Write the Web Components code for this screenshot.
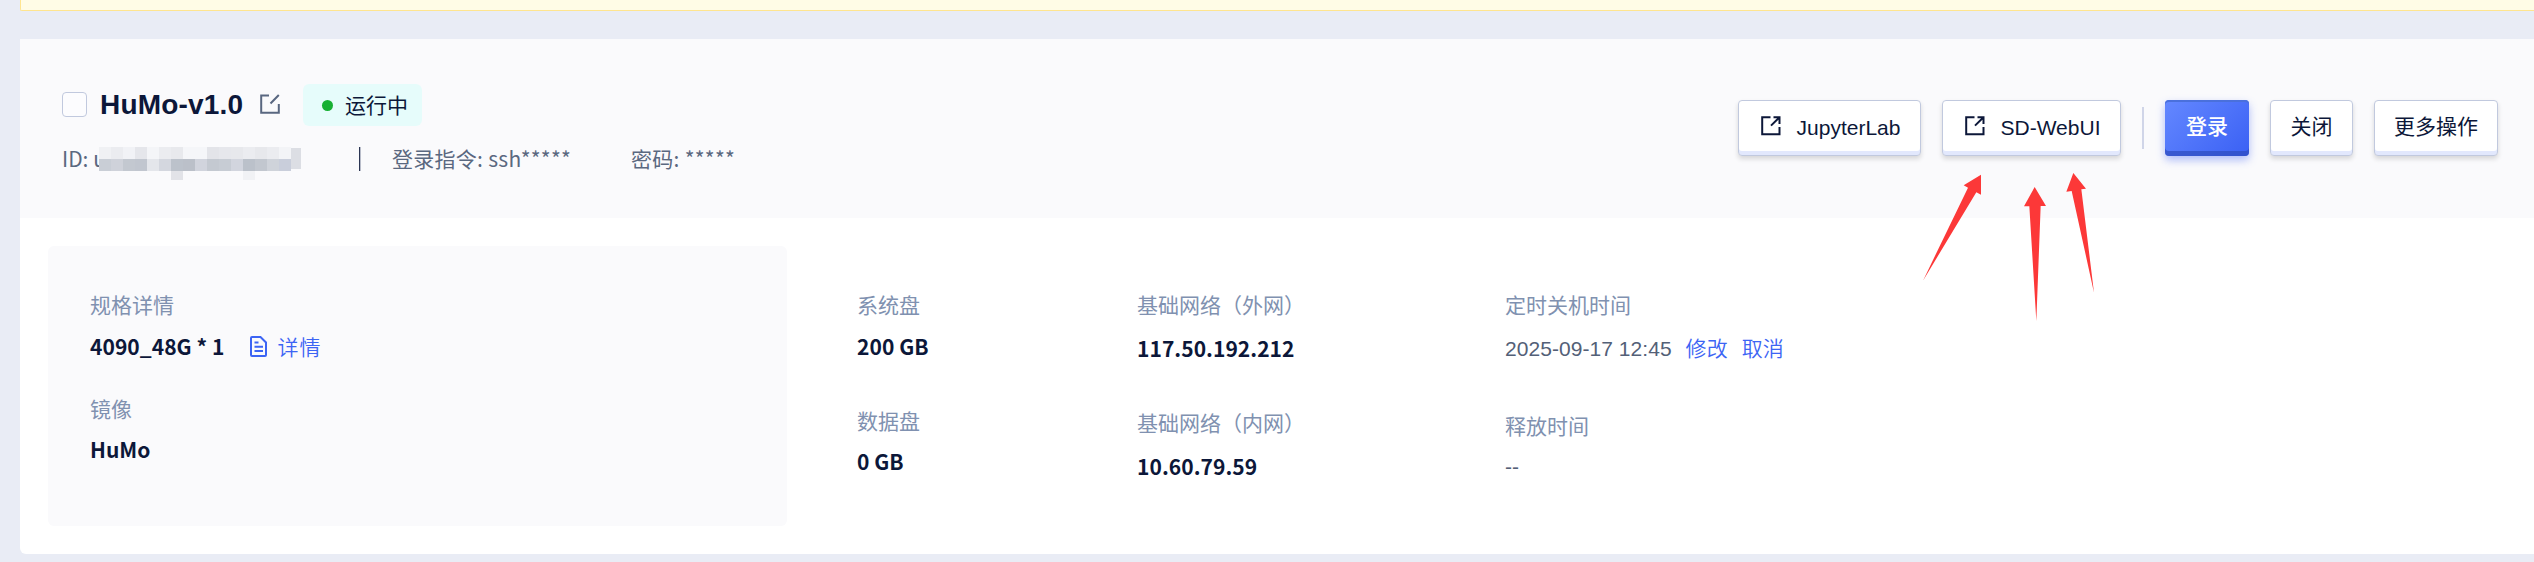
<!DOCTYPE html>
<html lang="zh-CN">
<head>
<meta charset="UTF-8">
<title>HuMo-v1.0</title>
<style>
  html, body {
    margin: 0;
    height: 562px;
    overflow: hidden;
    background: #e9ecf5;
    font-family: "Noto Sans CJK SC", sans-serif;
    font-size: 21px;
    line-height: 30px;
    color: #0c1739;
  }
</style>
</head>
<body>
<instance-page></instance-page>

<script>
const RESET = `* { box-sizing: border-box; } h1 { margin: 0; } button { margin: 0; padding: 0; }`;

class BaseElement extends HTMLElement {
  constructor() {
    super();
    this.attachShadow({mode: "open"});
  }
  connectedCallback() {
    const template = document.createElement("template");
    template.innerHTML = `<style>${RESET}${this.style_()}</style>${this.html_()}`;
    this.shadowRoot.appendChild(template.content.cloneNode(true));
  }
}

class UiIcon extends BaseElement {
  style_() {
    return `
      :host { display: block; flex: none; line-height: 0; }
      svg { display: block; fill: none; stroke: currentColor; stroke-width: 2; }
    `;
  }
  html_() {
    const icons = {
      edit: `<svg width="20" height="20"><path d="M9 1.5H1.2V18.8H18.8V10M10.5 9.5L18.8 1"/></svg>`,
      open: `<svg width="20" height="20"><path d="M9.5 1.2H1.2V18.2H18.5V11M12.5 1.2H18.5V8M18 1.7L10 9.6"/></svg>`,
      doc: `<svg width="17" height="21"><path d="M2 1H10.5L16 6.5V19a1 1 0 0 1-1 1H2a1 1 0 0 1-1-1V2a1 1 0 0 1 1-1ZM4.5 6.5H8.5M4.5 10.8H13M4.5 15H13"/></svg>`
    };
    return icons[this.getAttribute("name")];
  }
}

class UiButton extends BaseElement {
  style_() {
    return `
      :host { display: block; flex: none; }
      button {
        display: flex;
        align-items: center;
        justify-content: center;
        gap: 16px;
        width: 100%;
        height: 56px;
        padding-bottom: 3px;
        border: 1px solid #c1c9de;
        border-radius: 4px;
        background: #fff;
        box-shadow: inset 0 -4px 0 #e2e8fd, 0 3px 5px rgba(0, 0, 0, .14);
        color: #0c1739;
        font: 21px/30px "Liberation Sans", "Noto Sans CJK SC", sans-serif;
      }
      ui-icon { margin: -1px 0 0 2px; }
      .label { padding-top: 2px; }
      :host([cjk]) .label { padding-top: 0; }
      :host([type="primary"]) button {
        border: 0;
        background: linear-gradient(135deg, #6488ff, #3a60f4);
        box-shadow: inset 0 -5px 0 rgba(45, 75, 190, .7), inset 0 2px 0 #4a70dc, 0 4px 8px rgba(60, 96, 245, .4);
        color: #fff;
        font-weight: 500;
      }
    `;
  }
  html_() {
    const icon = this.hasAttribute("icon") ? `<ui-icon name="${this.getAttribute("icon")}"></ui-icon>` : "";
    return `<button>${icon}<span class="label"><slot></slot></span></button>`;
  }
}

class StatusBadge extends BaseElement {
  style_() {
    return `
      :host {
        display: flex;
        align-items: center;
        gap: 12px;
        width: 119px;
        height: 42px;
        padding-left: 19px;
        border-radius: 6px;
        background: #e6fcfb;
      }
      i { width: 11px; height: 11px; border-radius: 50%; background: #17b033; }
      span { margin-top: -2px; }
    `;
  }
  html_() {
    return `<i></i><span><slot></slot></span>`;
  }
}

// pixelated cover over the instance id
class IdMosaic extends BaseElement {
  style_() {
    return `:host { display: block; } svg { display: block; }`;
  }
  html_() {
    const rows = [
      ["#f0f1f4", "#ebecf0", "#f1f2f6", "#e5e6eb", "#f4f5f8", "#ebecf0", "#e8e9ed", "#f5f6f9", "#f5f6f9", "#e3e4e9", "#e6e7ec", "#e7e8ec", "#ebecf0", "#e7e8ec", "#ebecf0", "#f3f4f7"],
      ["#c9ced6", "#cfd2da", "#c3c8d0", "#c1c6cf", "#e4e6eb", "#d4d7df", "#bcc2cb", "#bbc0c9", "#d1d4dd", "#c4c9d1", "#c7ccd4", "#d2d5de", "#bbc1ca", "#c2c7cf", "#cfd3da", "#c9cedb"]
    ];
    let rects = "";
    rows.forEach((row, y) => row.forEach((fill, x) => {
      rects += `<rect x="${x * 12 + 1}" y="${y * 12}" width="12" height="12" fill="${fill}"/>`;
    }));
    return `<svg width="206" height="33">${rects}
      <rect x="193" y="1" width="10" height="21" fill="#dcdee4"/>
      <rect x="73" y="24" width="12" height="9" fill="#e2e3e8"/>
      <rect x="145" y="24" width="12" height="9" fill="#f1f2f5"/>
    </svg>`;
  }
}

class InstanceHeader extends BaseElement {
  style_() {
    return `
      :host {
        display: flex;
        justify-content: space-between;
        height: 179px;
        padding: 45px 36px 0 42px;
        background: #fafafc;
      }
      .title { display: flex; align-items: center; height: 42px; }
      .check { width: 25px; height: 25px; margin-top: -2px; border: 1px solid #c1c9de; border-radius: 4px; background: #fcfcfe; }
      h1 { margin-left: 13px; width: 160px; font: bold 28px/32px "Liberation Sans", sans-serif; letter-spacing: .2px; white-space: nowrap; }
      .edit { color: #596780; margin-top: -2px; }
      status-badge { margin-left: 23px; }
      .meta { display: flex; height: 33px; margin-top: 17px; color: #5a6880; line-height: 30px; }
      .id { width: 36px; white-space: nowrap; }
      .bar { width: 1px; height: 24px; margin: 4px 32px 0 55px; background: #2b3553; box-shadow: 1px 0 #b9bdca; }
      id-mosaic { margin-top: 4px; }
      .command { width: 239px; }
      .command, .password { letter-spacing: .28px; }
      .actions { display: flex; gap: 21px; margin-top: 16px; }
      .split { width: 2px; height: 42px; margin-top: 7px; background: #d0d5e8; }
    `;
  }
  html_() {
    return `
      <div>
        <div class="title">
          <span class="check"></span>
          <h1>HuMo-v1.0</h1>
          <ui-icon class="edit" name="edit"></ui-icon>
          <status-badge>运行中</status-badge>
        </div>
        <div class="meta">
          <span class="id">ID: u</span>
          <id-mosaic></id-mosaic>
          <span class="bar"></span>
          <span class="command">登录指令: ssh*****</span>
          <span class="password">密码: *****</span>
        </div>
      </div>
      <div class="actions">
        <ui-button icon="open" style="width:183px">JupyterLab</ui-button>
        <ui-button icon="open" style="width:179px">SD-WebUI</ui-button>
        <span class="split"></span>
        <ui-button cjk type="primary" style="width:84px">登录</ui-button>
        <ui-button cjk style="width:83px">关闭</ui-button>
        <ui-button cjk style="width:124px">更多操作</ui-button>
      </div>
    `;
  }
}

class InfoField extends BaseElement {
  style_() {
    return `
      :host { display: block; height: calc(60px + var(--gap, 11px)); white-space: nowrap; }
      .label { margin-top: -1px; padding-bottom: 1px; color: #8091b0; }
      .value { display: flex; align-items: center; height: 30px; margin-top: var(--gap, 11px); font-weight: bold; letter-spacing: .05px; }
      :host([plain]) .value { color: #536077; font-family: "Liberation Sans", "Noto Sans CJK SC", sans-serif; font-weight: normal; }
    `;
  }
  html_() {
    return `<div class="label">${this.getAttribute("label")}</div><div class="value"><slot></slot></div>`;
  }
}

class InstanceDetail extends BaseElement {
  style_() {
    return `
      :host { display: flex; padding: 28px 0 0 28px; }
      .panel, .col { display: flex; flex-direction: column; flex: none; }
      .panel { width: 739px; height: 280px; padding: 44px 42px 0; gap: 33px; border-radius: 6px; background: #fafafc; }
      .col { padding-top: 44px; gap: 45px; --gap: 11px; }
      .disk { width: 280px; margin-left: 70px; }
      .net { width: 368px; --gap: 13px; }
      .time { gap: 47px; --gap: 14px; }
      a { color: #3c64f4; font-family: "Noto Sans CJK SC", sans-serif; font-weight: 350; }
      .panel a { letter-spacing: 1px; }
      .time a { margin-top: -4px; }
      .doc { margin: 0 10px 0 26px; color: #3c64f4; }
      .time .edit { margin: -4px 14px 0; }
    `;
  }
  html_() {
    return `
      <div class="panel">
        <info-field label="规格详情">4090_48G * 1<ui-icon class="doc" name="doc"></ui-icon><a>详情</a></info-field>
        <info-field label="镜像" style="--gap:10px">HuMo</info-field>
      </div>
      <div class="col disk">
        <info-field label="系统盘">200 GB</info-field>
        <info-field label="数据盘" style="--gap:10px">0 GB</info-field>
      </div>
      <div class="col net">
        <info-field label="基础网络（外网）">117.50.192.212</info-field>
        <info-field label="基础网络（内网）">10.60.79.59</info-field>
      </div>
      <div class="col time">
        <info-field plain label="定时关机时间">2025-09-17 12:45<a class="edit">修改</a><a>取消</a></info-field>
        <info-field plain label="释放时间" style="--gap:11px">--</info-field>
      </div>
    `;
  }
}

// red pointers lying over the card
class PointerArrows extends BaseElement {
  style_() {
    return `
      :host { position: absolute; left: 1900px; top: 160px; pointer-events: none; }
      svg { display: block; fill: #fc3838; }
    `;
  }
  html_() {
    return `<svg width="220" height="170" viewBox="0 0 660 510">
      <path d="M243 44L191 76L204 83L69 362L229 97L243 104Z"/>
      <path d="M404 81L372 139H388L409 483L422 138H438Z"/>
      <path d="M520 39L499 95L515 93L582 398L544 88L558 86Z"/>
    </svg>`;
  }
}

class InstancePage extends BaseElement {
  style_() {
    return `
      :host { display: block; box-sizing: border-box; height: 562px; padding-left: 20px; }
      .notice { height: 11px; border: solid #ffe58f; border-width: 0 0 1px 1px; border-radius: 0 0 0 2px; background: #fffce6; }
      .card { height: 515px; margin-top: 28px; border-radius: 0 0 0 6px; overflow: hidden; background: #fff; }
    `;
  }
  html_() {
    return `
      <div class="notice"></div>
      <div class="card">
        <instance-header></instance-header>
        <instance-detail></instance-detail>
      </div>
      <pointer-arrows></pointer-arrows>
    `;
  }
}

customElements.define("ui-icon", UiIcon);
customElements.define("ui-button", UiButton);
customElements.define("status-badge", StatusBadge);
customElements.define("id-mosaic", IdMosaic);
customElements.define("info-field", InfoField);
customElements.define("instance-header", InstanceHeader);
customElements.define("instance-detail", InstanceDetail);
customElements.define("pointer-arrows", PointerArrows);
customElements.define("instance-page", InstancePage);
</script>
</body>
</html>
